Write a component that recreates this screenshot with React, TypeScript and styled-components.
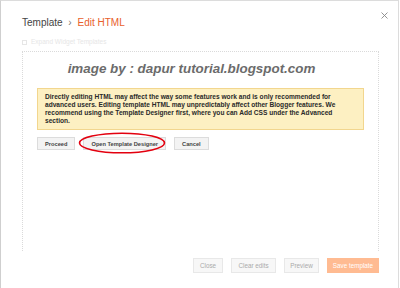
import React from "react"
import styled, { createGlobalStyle } from "styled-components"

const GlobalStyle = createGlobalStyle`
  html, body {
    margin: 0;
    padding: 0;
    background: #fff;
    font-family: "Liberation Sans", Arial, sans-serif;
  }
`

const CloseIcon = () => (
  <svg width="7" height="7" viewBox="0 0 7 7">
    <path d="M0.5 0.5 L6.5 6.5 M6.5 0.5 L0.5 6.5" stroke="#888" strokeWidth="0.9" fill="none" />
  </svg>
)

const Ellipse = () => (
  <svg width="88" height="22" viewBox="0 0 88 22">
    <ellipse cx="44" cy="11" rx="42.5" ry="9.8" stroke="#e3000f" strokeWidth="1.6" fill="none" />
  </svg>
)

export default function App() {
  return (
    <>
      <GlobalStyle />
      <S.Dialog>
        <S.Close>
          <CloseIcon />
        </S.Close>
        <S.Title>
          Template <S.Chevron>›</S.Chevron> <S.Current>Edit HTML</S.Current>
        </S.Title>
        <S.CheckRow>
          <S.Check />
          Expand Widget Templates
        </S.CheckRow>
        <S.Editor>
          <S.Watermark>image by : dapur tutorial.blogspot.com</S.Watermark>
          <S.Warning>
            Directly editing HTML may affect the way some features work and is only recommended for
            <br />
            advanced users. Editing template HTML may unpredictably affect other Blogger features. We
            <br />
            recommend using the Template Designer first, where you can Add CSS under the Advanced
            <br />
            section.
          </S.Warning>
          <S.ButtonRow>
            <S.Button>Proceed</S.Button>
            <S.Circled>
              <S.Button>Open Template Designer</S.Button>
              <S.Mark>
                <Ellipse />
              </S.Mark>
            </S.Circled>
            <S.Button>Cancel</S.Button>
          </S.ButtonRow>
        </S.Editor>
        <S.Footer>
          <S.FooterButton w={30}>Close</S.FooterButton>
          <S.FooterButton w={45}>Clear edits</S.FooterButton>
          <S.FooterButton w={35}>Preview</S.FooterButton>
          <S.FooterButton w={52} primary>
            Save template
          </S.FooterButton>
        </S.Footer>
      </S.Dialog>
    </>
  )
}

const S = {
  Dialog: styled.div`
    position: relative;
    box-sizing: border-box;
    width: 399px;
    height: 288px;
    border: 1px solid #dcdcdc;
    border-bottom: none;
    border-left-color: #cfcfcf;
    padding: 16px 19px 0 21px;
    display: flex;
    flex-direction: column;
  `,
  Close: styled.div`
    position: absolute;
    top: 11px;
    right: 10px;
    width: 7px;
    height: 7px;
    display: flex;
  `,
  Title: styled.div`
    font-size: 10px;
    line-height: 12px;
    color: #444;
    white-space: nowrap;
  `,
  Chevron: styled.span`
    color: #777;
    margin: 0 3px;
  `,
  Current: styled.span`
    color: #e8602c;
  `,
  CheckRow: styled.div`
    display: flex;
    align-items: center;
    gap: 4px;
    margin-top: 9px;
    font-size: 6.5px;
    line-height: 8px;
    color: #e6e6e6;
  `,
  Check: styled.span`
    box-sizing: border-box;
    width: 5px;
    height: 5px;
    border: 1px solid #e6e6e6;
  `,
  Editor: styled.div`
    box-sizing: border-box;
    width: 357px;
    height: 200px;
    margin-top: 5px;
    border: 1px dotted #dadada;
    border-bottom: none;
    padding: 9px 14px 0;
    display: flex;
    flex-direction: column;
  `,
  Watermark: styled.div`
    font-size: 13.4px;
    line-height: 16px;
    font-weight: bold;
    font-style: italic;
    color: #6b6b6b;
    text-align: center;
    padding-right: 18px;
    white-space: nowrap;
  `,
  Warning: styled.div`
    margin-top: 11px;
    border: 1px solid #f2d68e;
    background: #fdf0c2;
    padding: 4px 7px;
    font-size: 6.6px;
    line-height: 8px;
    font-weight: bold;
    color: #2a2a2a;
    white-space: nowrap;
  `,
  ButtonRow: styled.div`
    display: flex;
    gap: 8px;
    margin-top: 7px;
  `,
  Button: styled.div`
    box-sizing: border-box;
    height: 13px;
    padding: 0 7px;
    display: flex;
    align-items: center;
    border: 1px solid #dcdcdc;
    background: #f3f3f3;
    font-size: 5.7px;
    font-weight: bold;
    color: #444;
    white-space: nowrap;
  `,
  Circled: styled.div`
    position: relative;
  `,
  Mark: styled.div`
    position: absolute;
    left: -5px;
    top: -5px;
    display: flex;
  `,
  Footer: styled.div`
    width: 357px;
    display: flex;
    justify-content: flex-end;
    gap: 8px;
    margin-top: 7px;
  `,
  FooterButton: styled.div<{ primary?: boolean; w: number }>`
    box-sizing: border-box;
    width: ${({ w }) => w}px;
    height: 15px;
    display: flex;
    align-items: center;
    justify-content: center;
    border: 1px solid ${({ primary }) => (primary ? "#ffbb92" : "#e8e8e8")};
    background: ${({ primary }) => (primary ? "#ffbb92" : "#f7f7f7")};
    font-size: 6.3px;
    color: ${({ primary }) => (primary ? "#fff" : "#aaa")};
    white-space: nowrap;
  `,
}
